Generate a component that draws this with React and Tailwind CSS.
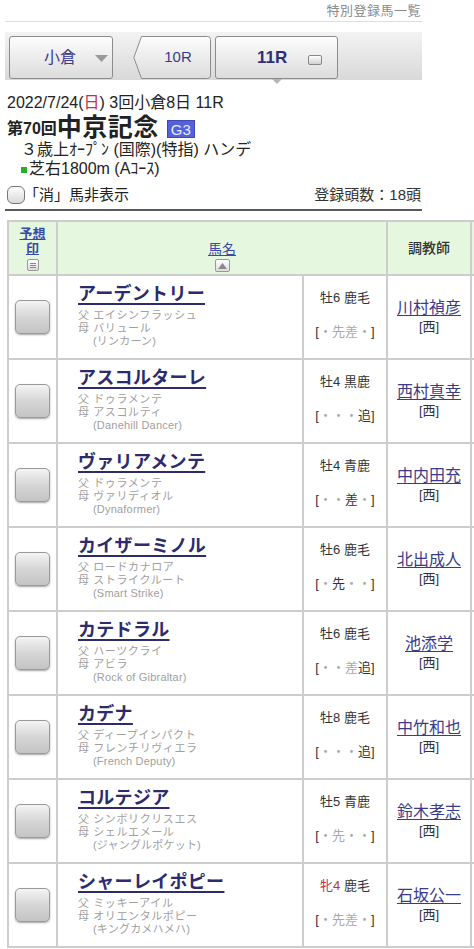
import React from "react";

const horses = [
  { name: "アーデントリー", sire: "エイシンフラッシュ", dam: "バリュール", bms: "(リンカーン)", sex: "牡6", coat: "鹿毛", leg: [["・", 0], ["先", 0], ["差", 0], ["・", 0]], trainer: "川村禎彦" },
  { name: "アスコルターレ", sire: "ドゥラメンテ", dam: "アスコルティ", bms: "(Danehill Dancer)", sex: "牡4", coat: "黒鹿", leg: [["・", 0], ["・", 0], ["・", 0], ["追", 1]], trainer: "西村真幸" },
  { name: "ヴァリアメンテ", sire: "ドゥラメンテ", dam: "ヴァリディオル", bms: "(Dynaformer)", sex: "牡4", coat: "青鹿", leg: [["・", 0], ["・", 0], ["差", 1], ["・", 0]], trainer: "中内田充" },
  { name: "カイザーミノル", sire: "ロードカナロア", dam: "ストライクルート", bms: "(Smart Strike)", sex: "牡6", coat: "鹿毛", leg: [["・", 0], ["先", 1], ["・", 0], ["・", 0]], trainer: "北出成人" },
  { name: "カテドラル", sire: "ハーツクライ", dam: "アビラ", bms: "(Rock of Gibraltar)", sex: "牡6", coat: "鹿毛", leg: [["・", 0], ["・", 0], ["差", 0], ["追", 1]], trainer: "池添学" },
  { name: "カデナ", sire: "ディープインパクト", dam: "フレンチリヴィエラ", bms: "(French Deputy)", sex: "牡8", coat: "鹿毛", leg: [["・", 0], ["・", 0], ["・", 0], ["追", 1]], trainer: "中竹和也" },
  { name: "コルテジア", sire: "シンボリクリスエス", dam: "シェルエメール", bms: "(ジャングルポケット)", sex: "牡5", coat: "青鹿", leg: [["・", 0], ["先", 0], ["・", 0], ["・", 0]], trainer: "鈴木孝志" },
  { name: "シャーレイポピー", sire: "ミッキーアイル", dam: "オリエンタルポピー", bms: "(キングカメハメハ)", sex: "牝4", coat: "鹿毛", leg: [["・", 0], ["先", 0], ["差", 0], ["・", 0]], trainer: "石坂公一", mare: true },
];

const font = { fontFamily: '"Liberation Sans", "Noto Sans CJK JP", sans-serif' };

function CheckBox() {
  return (
    <div className="w-[35px] h-[34px] rounded-[5px] border border-[#9a9a9a] bg-gradient-to-b from-[#f4f4f4] via-[#d6d6d6] to-[#c4c4c4] shadow-[0_1px_2px_rgba(0,0,0,0.35)]" />
  );
}

function Row({ h }) {
  return (
    <>
      <div className="bg-white h-[82px] flex items-center justify-center">
        <CheckBox />
      </div>
      <div className="bg-white h-[82px] pl-[20px] pt-[6px]">
        <div className="text-[18px] leading-[24px] font-bold text-[#2b2b6e] underline decoration-[1.5px] underline-offset-[3px] tracking-[0.3px]">{h.name}</div>
        <div className="text-[11px] leading-[13px] text-[#a0a0a0] mt-[3px] tracking-[0.6px]">父 {h.sire}</div>
        <div className="text-[11px] leading-[13px] text-[#a0a0a0] tracking-[0.6px]">母 {h.dam}</div>
        <div className="text-[11px] leading-[13px] text-[#a0a0a0] pl-[15px] tracking-[0.2px]">{h.bms}</div>
      </div>
      <div className="bg-white h-[82px] flex flex-col items-center pt-[13px]">
        <div className="text-[13px] leading-[18px] text-[#333]">
          <span className={h.mare ? "text-[#b8304e]" : ""}>{h.sex}</span> {h.coat}
        </div>
        <div className="text-[13px] leading-[18px] text-[#333] mt-[16px]">
          [{h.leg.map(([c, d], i) => (
            <span key={i} className={d ? "text-[#333]" : "text-[#aaa]"}>{c}</span>
          ))}]
        </div>
      </div>
      <div className="bg-white h-[82px] flex flex-col items-center justify-center pb-[1px]">
        <div className="text-[16px] leading-[20px] text-[#3b3b8a] underline underline-offset-[2px] decoration-[1px]">{h.trainer}</div>
        <div className="text-[13px] leading-[16px] text-[#333] mt-[1px]">[西]</div>
      </div>
      <div className="bg-white h-[82px]" />
    </>
  );
}

export default function App() {
  return (
    <div className="w-[474px] overflow-hidden bg-white text-[#222]" style={font}>
      <div className="w-[417px] ml-[5px]">
        {/* top link */}
        <div className="h-[22px] flex items-center justify-end pr-[1px] border-b border-[#dedede]">
          <span className="text-[13px] text-[#8a8a8a] tracking-[0.5px]">特別登録馬一覧</span>
        </div>
        {/* nav bar */}
        <div className="mt-[10px] h-[48px] bg-gradient-to-b from-[#f3f3f3] to-[#d9d9d9] flex items-start pt-[4px] pl-[4px] relative">
          <div className="w-[104px] h-[43px] rounded-[3px] border border-[#8c8c8c] bg-gradient-to-b from-[#fdfdfd] to-[#dcdcdc] flex items-center pl-[34px]">
            <span className="text-[16px] text-[#3a3a8c]">小倉</span>
            <svg width="13" height="7" viewBox="0 0 13 7" className="ml-[19px] mt-[2px]"><polygon points="0,0 13,0 6.5,7" fill="#9a9a9a" /></svg>
          </div>
          <div className="relative w-[78px] h-[43px] ml-[20px]">
            <svg width="78" height="43" viewBox="0 0 78 43" className="absolute inset-0">
              <defs>
                <linearGradient id="g10" x1="0" y1="0" x2="0" y2="1">
                  <stop offset="0" stopColor="#fdfdfd" />
                  <stop offset="1" stopColor="#dcdcdc" />
                </linearGradient>
              </defs>
              <path d="M8.5 0.5 H74.5 Q77.5 0.5 77.5 3.5 V39.5 Q77.5 42.5 74.5 42.5 H8.5 L0.8 21.5 Z" fill="url(#g10)" stroke="#8c8c8c" strokeWidth="1" />
            </svg>
            <div className="absolute inset-0 flex items-center justify-center pl-[12px]">
              <span className="text-[15px] text-[#3a3a8c]">10R</span>
            </div>
          </div>
          <div className="relative w-[123px] h-[43px] ml-[4px] rounded-[3px] border border-[#8c8c8c] bg-gradient-to-b from-[#fdfdfd] to-[#dcdcdc] flex items-center pl-[41px]">
            <span className="text-[17px] font-bold text-[#2e2e80]">11R</span>
            <div className="ml-[21px] mt-[5px] w-[14px] h-[10px] rounded-[2px] border border-[#888] bg-gradient-to-b from-white to-[#d0d0d0]" />
            <svg width="10" height="5" viewBox="0 0 10 5" className="absolute left-[56px] -bottom-[6px]"><polygon points="0,0 10,0 5,5" fill="#b5b5b5" /></svg>
          </div>
        </div>
        {/* race info */}
        <div className="pl-[2px] mt-[14px] text-[16px] leading-[18px] text-[#222]">
          2022/7/24(<span className="text-[#c0304a]">日</span>) 3回小倉8日 11R
        </div>
        <div className="pl-[2px] mt-[1px] flex items-end h-[28px]">
          <span className="text-[16px] font-bold leading-[22px] mb-[1px]">第70回</span>
          <span className="text-[25px] font-bold leading-[28px] tracking-[0.5px]">中京記念</span>
          <span className="ml-[8px] mb-[3px] px-[3px] h-[18px] leading-[18px] text-[15px] bg-[#5561d8] text-[#e8ecff] border border-[#3f49b5]">G3</span>
        </div>
        <div className="pl-[16px] -mt-[1px] text-[16px] leading-[19px] text-[#222]">３歳上ｵｰﾌﾟﾝ (国際)(特指) ハンデ</div>
        <div className="pl-[16px] text-[16px] leading-[19px] text-[#222] flex items-center">
          <span className="inline-block w-[6px] h-[6px] bg-[#22b02a] mr-[2px] mt-[3px]" />
          芝右1800m (Aｺｰｽ)
        </div>
        <div className="mt-[6px] h-[22px] flex items-center justify-between pl-[2px] pr-[1px]">
          <div className="flex items-center">
            <div className="w-[18px] h-[18px] rounded-[6px] border border-[#777] bg-gradient-to-b from-white to-[#d8d8d8]" />
            <span className="text-[15px] text-[#222] -ml-[1px]">「消」馬非表示</span>
          </div>
          <span className="text-[15px] text-[#333]">登録頭数：18頭</span>
        </div>
        <div className="mt-[3px] h-[2px] bg-[#5a5a5a]" />
      </div>

      {/* table */}
      <div className="mt-[9px] ml-[7px] w-[540px] bg-[#cdcdcd] p-[2px] grid grid-cols-[47px_244px_82px_82px_70px] gap-[2px]">
        <div className="bg-[#e6f7df] h-[52px] flex flex-col items-center pt-[5px]">
          <span className="text-[13px] leading-[14px] font-bold text-[#3a48a8] underline">予想</span>
          <span className="text-[13px] leading-[15px] font-bold text-[#3a48a8] underline">印</span>
          <div className="mt-[3px] w-[12px] h-[12px] rounded-[2px] border border-[#999] bg-gradient-to-b from-white to-[#dcdcdc] flex flex-col justify-center gap-[1px] px-[2px]">
            <div className="h-px bg-[#888]" />
            <div className="h-px bg-[#888]" />
            <div className="h-px bg-[#888]" />
          </div>
        </div>
        <div className="bg-[#e6f7df] h-[52px] col-span-2 flex flex-col items-center pt-[19px]">
          <span className="text-[14px] leading-[16px] text-[#3a48a8] underline">馬名</span>
          <div className="mt-[2px] w-[15px] h-[13px] rounded-[2px] border border-[#999] bg-gradient-to-b from-white to-[#dcdcdc] flex items-center justify-center">
            <svg width="9" height="6" viewBox="0 0 9 6"><polygon points="4.5,0 9,6 0,6" fill="#8a8a8a" /></svg>
          </div>
        </div>
        <div className="bg-[#e6f7df] h-[52px] flex items-center justify-center">
          <span className="text-[14px] text-[#333] font-medium">調教師</span>
        </div>
        <div className="bg-[#e6f7df] h-[52px]" />
        {horses.map((h, i) => (
          <Row key={i} h={h} />
        ))}
      </div>
    </div>
  );
}
